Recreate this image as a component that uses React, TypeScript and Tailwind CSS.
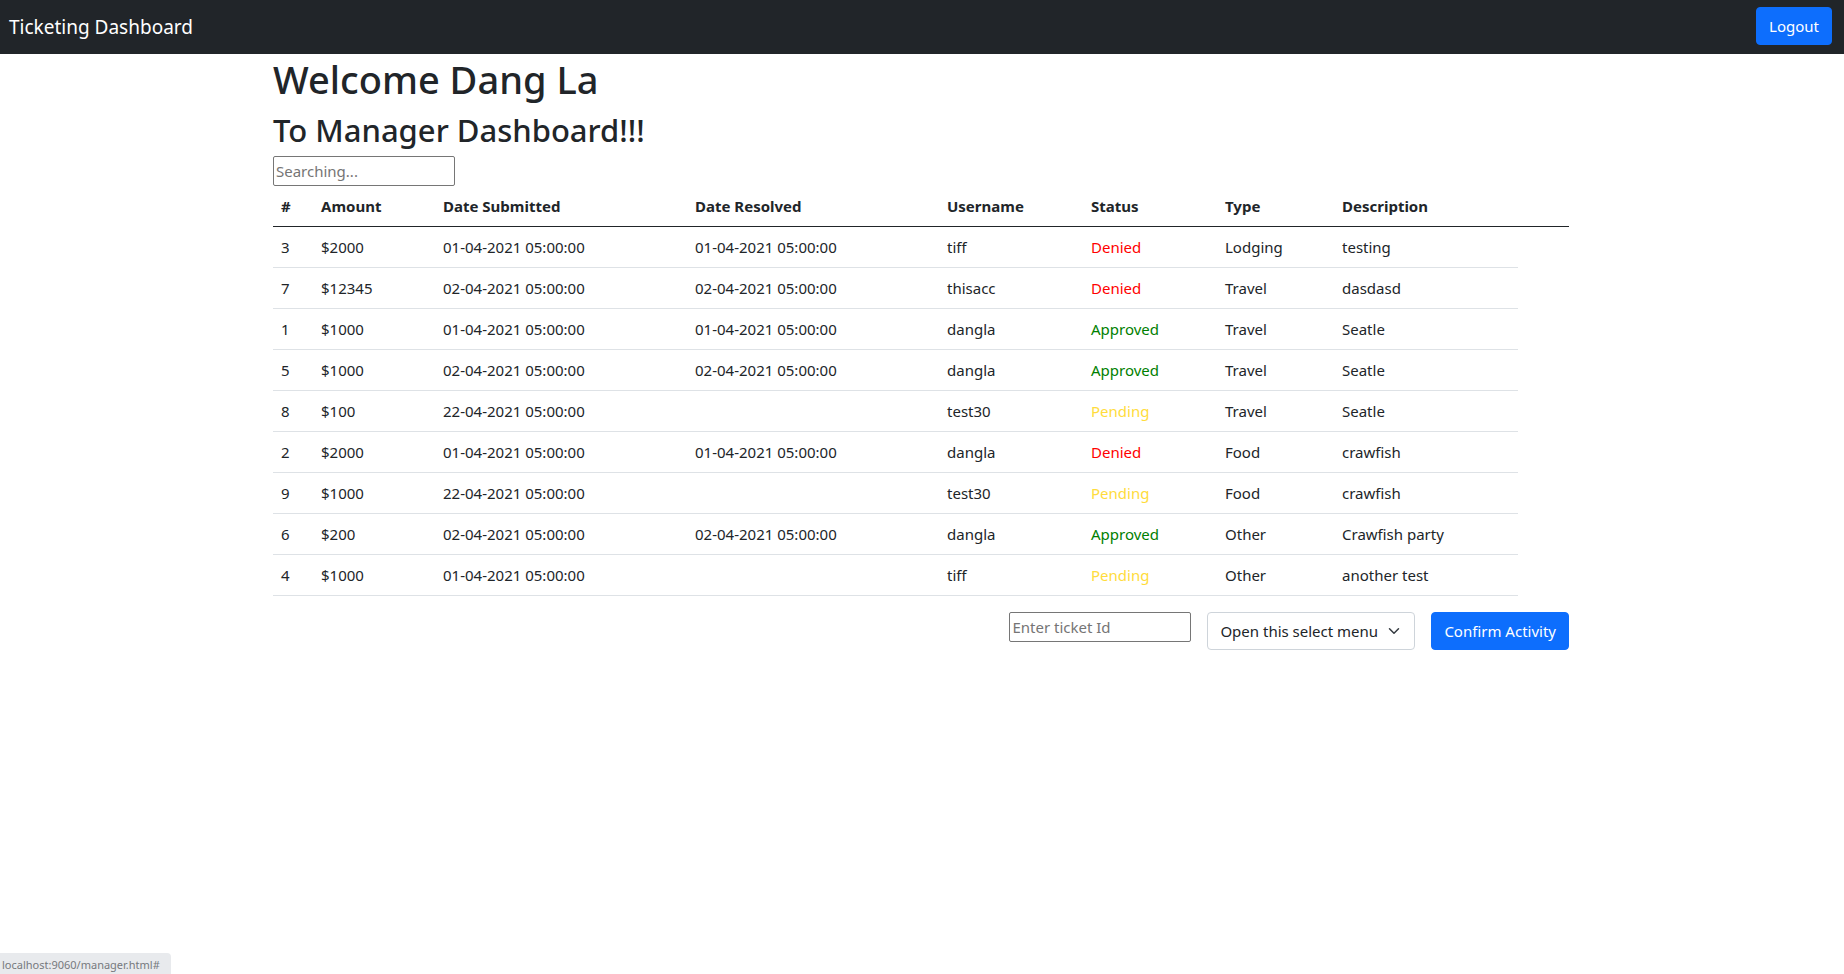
type Status = 'Denied' | 'Approved' | 'Pending';

interface Ticket {
  id: number;
  amount: string;
  submitted: string;
  resolved: string;
  username: string;
  status: Status;
  type: string;
  description: string;
}

const APR1 = '01-04-2021 05:00:00';
const APR2 = '02-04-2021 05:00:00';
const APR22 = '22-04-2021 05:00:00';

const tickets: Ticket[] = [
  { id: 3, amount: '$2000', submitted: APR1, resolved: APR1, username: 'tiff', status: 'Denied', type: 'Lodging', description: 'testing' },
  { id: 7, amount: '$12345', submitted: APR2, resolved: APR2, username: 'thisacc', status: 'Denied', type: 'Travel', description: 'dasdasd' },
  { id: 1, amount: '$1000', submitted: APR1, resolved: APR1, username: 'dangla', status: 'Approved', type: 'Travel', description: 'Seatle' },
  { id: 5, amount: '$1000', submitted: APR2, resolved: APR2, username: 'dangla', status: 'Approved', type: 'Travel', description: 'Seatle' },
  { id: 8, amount: '$100', submitted: APR22, resolved: '', username: 'test30', status: 'Pending', type: 'Travel', description: 'Seatle' },
  { id: 2, amount: '$2000', submitted: APR1, resolved: APR1, username: 'dangla', status: 'Denied', type: 'Food', description: 'crawfish' },
  { id: 9, amount: '$1000', submitted: APR22, resolved: '', username: 'test30', status: 'Pending', type: 'Food', description: 'crawfish' },
  { id: 6, amount: '$200', submitted: APR2, resolved: APR2, username: 'dangla', status: 'Approved', type: 'Other', description: 'Crawfish party' },
  { id: 4, amount: '$1000', submitted: APR1, resolved: '', username: 'tiff', status: 'Pending', type: 'Other', description: 'another test' },
];

const statusColor: Record<Status, string> = {
  Denied: 'text-[#ff0000]',
  Approved: 'text-[#008000]',
  Pending: 'text-[#ffdc3c]',
};

const columns = [
  { label: '#', width: 'w-[40px]' },
  { label: 'Amount', width: 'w-[122px]' },
  { label: 'Date Submitted', width: 'w-[252px]' },
  { label: 'Date Resolved', width: 'w-[252px]' },
  { label: 'Username', width: 'w-[144px]' },
  { label: 'Status', width: 'w-[134px]' },
  { label: 'Type', width: 'w-[117px]' },
  { label: 'Description', width: 'w-[184px]' },
  { label: '', width: 'w-[51px]' },
];

const button = 'h-[38px] cursor-pointer rounded border border-[#0d6efd] bg-[#0d6efd] px-3 text-white';
const textBox =
  'h-[30px] w-[182px] rounded-[2px] border border-[#767676] bg-white px-[2px] text-[#212529] placeholder:text-[#757575]';

function TicketTable() {
  return (
    <table className="mb-4 w-full table-fixed border-collapse text-left">
      <thead>
        <tr className="h-[40px] border-b border-[#212529]">
          {columns.map((column) => (
            <th key={column.label} scope="col" className={`${column.width} px-2 font-bold`}>
              {column.label}
            </th>
          ))}
        </tr>
      </thead>
      <tbody>
        {tickets.map((ticket) => (
          <tr key={ticket.id} className="h-[41px] *:border-b *:border-[#dee2e6] *:px-2">
            <td>{ticket.id}</td>
            <td>{ticket.amount}</td>
            <td>{ticket.submitted}</td>
            <td>{ticket.resolved}</td>
            <td>{ticket.username}</td>
            <td className={statusColor[ticket.status]}>{ticket.status}</td>
            <td>{ticket.type}</td>
            <td>{ticket.description}</td>
          </tr>
        ))}
      </tbody>
    </table>
  );
}

export default function App() {
  return (
    <div className="min-h-screen bg-white font-['Noto_Sans',sans-serif] text-[15px] leading-6 text-[#212529]">
      <nav className="flex h-[54px] items-start justify-between bg-[#212529] pt-[7px] pr-3 pl-[9px]">
        <a href="#" className="text-[19px] leading-10 text-white">
          Ticketing Dashboard
        </a>
        <button type="button" className={button}>
          Logout
        </button>
      </nav>

      <main className="pr-[2px]">
        <div className="mx-auto max-w-[1320px] px-3">
          <h1 className="mb-[6px] text-[38px] leading-[50px] font-medium">Welcome Dang La</h1>
          <h2 className="mb-[6px] text-[31px] leading-10 font-medium">To Manager Dashboard!!!</h2>
          <input type="search" aria-label="Search tickets" placeholder="Searching..." className={`block ${textBox}`} />

          <TicketTable />

          <form className="flex items-start justify-end gap-4">
            <input type="text" aria-label="Ticket id" placeholder="Enter ticket Id" className={textBox} />
            <div className="relative">
              <select
                aria-label="Ticket activity"
                className="h-[38px] w-[208px] appearance-none rounded border border-[#ced4da] bg-white pr-9 pl-3"
              >
                <option>Open this select menu</option>
                <option>Approve</option>
                <option>Deny</option>
              </select>
              <svg
                viewBox="0 0 16 16"
                className="pointer-events-none absolute top-[13px] right-[15px] size-3"
                fill="none"
                stroke="#343a40"
                strokeWidth="2"
                strokeLinecap="round"
                strokeLinejoin="round"
              >
                <path d="M2 5l6 6 6-6" />
              </svg>
            </div>
            <button type="button" className={button}>
              Confirm Activity
            </button>
          </form>
        </div>
      </main>

      <div className="fixed bottom-0 left-0 h-[21px] w-[171px] rounded-tr bg-[#e8eaed] pl-[2px] text-[11px] leading-6 whitespace-nowrap text-[#76797d]">
        localhost:9060/manager.html#
      </div>
    </div>
  );
}
